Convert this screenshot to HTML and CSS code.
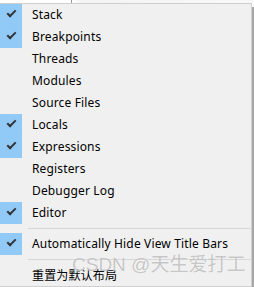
FILE: index.html
```html
<!DOCTYPE html>
<html lang="zh-CN">
<head>
  <meta charset="UTF-8">
  <meta name="viewport" content="width=device-width, initial-scale=1.0">
  <title>View menu</title>
  <link rel="stylesheet" href="styles.css">
</head>
<body>
  <div class="top-strip">
    <div class="tab-edge"></div>
  </div>
  <div class="menu">
    <div class="item checked"><span class="check"></span><span class="label">Stack</span></div>
    <div class="item checked"><span class="check"></span><span class="label">Breakpoints</span></div>
    <div class="item"><span class="check"></span><span class="label">Threads</span></div>
    <div class="item"><span class="check"></span><span class="label">Modules</span></div>
    <div class="item"><span class="check"></span><span class="label">Source Files</span></div>
    <div class="item checked"><span class="check"></span><span class="label">Locals</span></div>
    <div class="item checked"><span class="check"></span><span class="label">Expressions</span></div>
    <div class="item"><span class="check"></span><span class="label">Registers</span></div>
    <div class="item"><span class="check"></span><span class="label">Debugger Log</span></div>
    <div class="item checked"><span class="check"></span><span class="label">Editor</span></div>
    <div class="sep"></div>
    <div class="item checked"><span class="check"></span><span class="label">Automatically Hide View Title Bars</span></div>
    <div class="sep"></div>
    <div class="item last">
      <span class="check"></span><span class="label cjk">重置为默认布局</span>
      <!-- 水印 -->
      <span class="watermark">CSDN @天生爱打工</span>
    </div>
  </div>
</body>
</html>
```
FILE: styles.css
```css
html, body {
  margin: 0;
  padding: 0;
}
body {
  background: #fff;
  font-family: "Noto Sans", "Noto Sans CJK SC", sans-serif;
  font-size: 12px;
  color: #000;
  width: 254px;
  height: 287px;
  overflow: hidden;
}

.top-strip {
  height: 3px;
  background: linear-gradient(to right, #fff 0, #fff 72px, #f4f4f4 80px, #f8f8f8 100%);
}
.tab-edge {
  width: 72px;
  height: 3px;
  box-sizing: border-box;
  border-right: 1px solid #9a9a9a;
}

.menu {
  width: 251px;
  background: #f0f0f0;
  border-top: 1px solid #cfcfcf;
  border-right: 1px solid #cfcfcf;
  border-bottom: 1px solid #cfcfcf;
  box-shadow: 2px 4px 0 #a8a8a8;
}
.item {
  position: relative;
  display: flex;
  align-items: center;
  height: 22px;
}
.item .check {
  position: relative;
  width: 22px;
  height: 22px;
  flex: none;
}
.item.checked .check {
  background: #91c9f7;
}
.item.checked .check::after {
  content: '';
  position: absolute;
  left: 7px;
  top: 6px;
  width: 7px;
  height: 3px;
  border-left: 2px solid #333;
  border-bottom: 2px solid #333;
  transform: rotate(-45deg);
}
.item .label {
  padding-left: 10px;
  white-space: nowrap;
  line-height: 22px;
  letter-spacing: 0.15px;
}
.cjk {
  font-family: "Noto Sans CJK SC", sans-serif;
  letter-spacing: 0;
}
.sep {
  height: 9px;
  display: flex;
  align-items: center;
  padding-left: 28px;
}
.sep::before {
  content: '';
  display: block;
  flex: 1;
  height: 1px;
  background: #d7d7d7;
}

.watermark {
  position: absolute;
  left: 72px;
  top: -11px;
  font-family: "Liberation Sans", "Noto Sans CJK SC", sans-serif;
  font-size: 19px;
  line-height: 24px;
  color: rgba(150, 150, 150, 0.55);
  white-space: nowrap;
  text-shadow: 0 0 1px #fff;
}
```
